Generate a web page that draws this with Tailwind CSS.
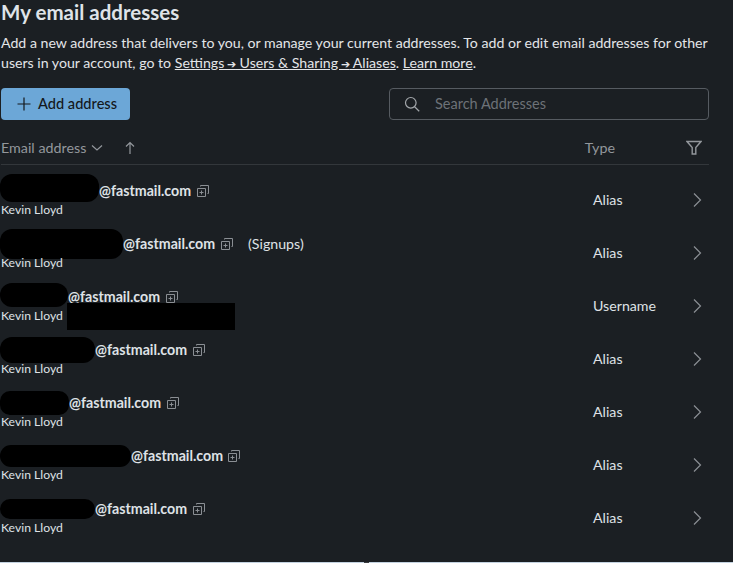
<!DOCTYPE html>
<html lang="en">
<head>
    <meta charset="UTF-8">
    <title>My email addresses</title>
    <script src="https://cdn.jsdelivr.net/npm/@tailwindcss/browser@4"></script>
</head>
<body class="bg-[#1b1f23] font-['Lato',sans-serif] text-[#e3e5e8] h-[563px] overflow-hidden relative">

<div class="w-[708px] ml-[1px]">
    <h1 class="text-[20.5px] leading-[24px] font-bold text-[#dfe3e8]">My email addresses</h1>
    <p class="mt-[9px] text-[14.15px] leading-[20px] text-[#e3e5e8]">
        Add a new address that delivers to you, or manage your current addresses. To add or edit email addresses for other users in your account, go to <a class="underline">Settings <span class="text-[11px] -ml-[1px]">➔</span> Users &amp; Sharing <span class="text-[11px] -ml-[1px]">➔</span> Aliases</a>. <a class="underline">Learn more</a>.
    </p>

    <div class="mt-[14px] flex justify-between items-center">
        <button class="w-[129px] h-[32px] rounded-[4px] bg-[#6ca7d7] text-[#14181c] text-[14.6px] font-medium flex items-center pl-[15px] gap-[6px]">
            <svg width="16" height="16" viewBox="0 0 16 16" fill="none" stroke="currentColor" stroke-width="1.2"><path d="M8 1.5v13M1.5 8h13"/></svg>
            Add address
        </button>
        <div class="w-[320px] h-[32px] rounded-[4px] border border-[#565b61] flex items-center pl-[14px] gap-[15px] text-[14.5px] text-[#6d7278]">
            <svg class="text-[#a3a7ab]" width="16" height="16" viewBox="0 0 16 16" fill="none" stroke="currentColor" stroke-width="1.2"><circle cx="6.8" cy="6.8" r="5.3"/><path d="M10.6 10.8l4.6 4.4"/></svg>
            Search Addresses
        </div>
    </div>

    <div class="mt-[12px] h-[33px] border-b border-[#33373b] flex items-center text-[14.3px] text-[#93979c]">
        <span>Email address</span>
        <svg class="ml-[5px]" width="12" height="12" viewBox="0 0 12 12" fill="none" stroke="currentColor" stroke-width="1.2"><path d="M1 3.5l5 4.5 5-4.5"/></svg>
        <svg class="ml-[21px]" width="12" height="14" viewBox="0 0 12 14" fill="none" stroke="currentColor" stroke-width="1.2"><path d="M6 13V1.5M2 5.5l4-4 4 4"/></svg>
        <span class="ml-auto mr-[71px]">Type</span>
        <svg class="mr-[7px]" width="16" height="16" viewBox="0 0 16 16" fill="none" stroke="currentColor" stroke-width="1.4"><path d="M1 1.5h14L9.8 7.5v6.5H6.2V7.5z"/></svg>
    </div>

    <div class="mt-[8px] -ml-[1px]">
        <!-- row 1 -->
        <div class="h-[53px] flex items-center">
            <div class="flex-1">
                <div class="h-[19px] pt-[3px] flex items-center text-[14.2px] font-bold text-[#dfe2e6]">
                    <span class="block w-[99px] h-[28px] -mt-[8px] -mb-[2px] bg-black rounded-[12px] shrink-0"></span>
                    <span>@fastmail.com</span>
                    <svg class="ml-[6px] text-[#8b8f94]" width="12" height="12" viewBox="0 0 12 12" fill="none" stroke="currentColor"><path d="M3.5 1.5V.5h8v8h-1M.5 3.5h8v8h-8zM4.5 5.5v4M2.5 7.5h4"/></svg>
                </div>
                <div class="h-[20px] pt-[1px] text-[12.2px] leading-[19px] text-[#dfe2e6] ml-[1px]">Kevin Lloyd</div>
            </div>
            <span class="w-[98px] text-[14.2px] text-[#dfe2e6]">Alias</span>
            <svg class="mr-[6px] text-[#8b8f94]" width="12" height="16" viewBox="0 0 12 16" fill="none" stroke="currentColor" stroke-width="1.2"><path d="M3 1.5l6.5 6.5L3 14.5"/></svg>
        </div>
        <!-- row 2 -->
        <div class="h-[53px] flex items-center">
            <div class="flex-1">
                <div class="h-[19px] pt-[3px] flex items-center text-[14.2px] font-bold text-[#dfe2e6]">
                    <span class="block w-[123px] h-[30px] -my-[6px] bg-black rounded-[12px] shrink-0"></span>
                    <span>@fastmail.com</span>
                    <svg class="ml-[6px] text-[#8b8f94]" width="12" height="12" viewBox="0 0 12 12" fill="none" stroke="currentColor"><path d="M3.5 1.5V.5h8v8h-1M.5 3.5h8v8h-8zM4.5 5.5v4M2.5 7.5h4"/></svg>
                    <span class="ml-[15px] font-normal">(Signups)</span>
                </div>
                <div class="h-[20px] pt-[1px] text-[12.2px] leading-[19px] text-[#dfe2e6] ml-[1px]">Kevin Lloyd</div>
            </div>
            <span class="w-[98px] text-[14.2px] text-[#dfe2e6]">Alias</span>
            <svg class="mr-[6px] text-[#8b8f94]" width="12" height="16" viewBox="0 0 12 16" fill="none" stroke="currentColor" stroke-width="1.2"><path d="M3 1.5l6.5 6.5L3 14.5"/></svg>
        </div>
        <!-- row 3 -->
        <div class="h-[53px] flex items-center relative">
            <div class="flex-1">
                <div class="h-[19px] pt-[3px] flex items-center text-[14.2px] font-bold text-[#dfe2e6]">
                    <span class="block w-[68px] h-[24px] -mt-[5px] -mb-[1px] bg-black rounded-[12px] shrink-0"></span>
                    <span>@fastmail.com</span>
                    <svg class="ml-[6px] text-[#8b8f94]" width="12" height="12" viewBox="0 0 12 12" fill="none" stroke="currentColor"><path d="M3.5 1.5V.5h8v8h-1M.5 3.5h8v8h-8zM4.5 5.5v4M2.5 7.5h4"/></svg>
                </div>
                <div class="h-[20px] pt-[1px] text-[12.2px] leading-[19px] text-[#dfe2e6] ml-[1px]">Kevin Lloyd</div>
            </div>
            <span class="w-[98px] text-[14.2px] text-[#dfe2e6]">Username</span>
            <svg class="mr-[6px] text-[#8b8f94]" width="12" height="16" viewBox="0 0 12 16" fill="none" stroke="currentColor" stroke-width="1.2"><path d="M3 1.5l6.5 6.5L3 14.5"/></svg>
            <div class="absolute left-[67px] top-[24px] w-[168px] h-[27px] bg-black"></div>
        </div>
        <!-- row 4 -->
        <div class="h-[53px] flex items-center">
            <div class="flex-1">
                <div class="h-[19px] pt-[3px] flex items-center text-[14.2px] font-bold text-[#dfe2e6]">
                    <span class="block w-[95px] h-[26px] -my-[4px] bg-black rounded-[12px] shrink-0"></span>
                    <span>@fastmail.com</span>
                    <svg class="ml-[6px] text-[#8b8f94]" width="12" height="12" viewBox="0 0 12 12" fill="none" stroke="currentColor"><path d="M3.5 1.5V.5h8v8h-1M.5 3.5h8v8h-8zM4.5 5.5v4M2.5 7.5h4"/></svg>
                </div>
                <div class="h-[20px] pt-[1px] text-[12.2px] leading-[19px] text-[#dfe2e6] ml-[1px]">Kevin Lloyd</div>
            </div>
            <span class="w-[98px] text-[14.2px] text-[#dfe2e6]">Alias</span>
            <svg class="mr-[6px] text-[#8b8f94]" width="12" height="16" viewBox="0 0 12 16" fill="none" stroke="currentColor" stroke-width="1.2"><path d="M3 1.5l6.5 6.5L3 14.5"/></svg>
        </div>
        <!-- row 5 -->
        <div class="h-[53px] flex items-center">
            <div class="flex-1">
                <div class="h-[19px] pt-[3px] flex items-center text-[14.2px] font-bold text-[#dfe2e6]">
                    <span class="block w-[69px] h-[24px] -my-[3px] bg-black rounded-[10px] shrink-0"></span>
                    <span>@fastmail.com</span>
                    <svg class="ml-[6px] text-[#8b8f94]" width="12" height="12" viewBox="0 0 12 12" fill="none" stroke="currentColor"><path d="M3.5 1.5V.5h8v8h-1M.5 3.5h8v8h-8zM4.5 5.5v4M2.5 7.5h4"/></svg>
                </div>
                <div class="h-[20px] pt-[1px] text-[12.2px] leading-[19px] text-[#dfe2e6] ml-[1px]">Kevin Lloyd</div>
            </div>
            <span class="w-[98px] text-[14.2px] text-[#dfe2e6]">Alias</span>
            <svg class="mr-[6px] text-[#8b8f94]" width="12" height="16" viewBox="0 0 12 16" fill="none" stroke="currentColor" stroke-width="1.2"><path d="M3 1.5l6.5 6.5L3 14.5"/></svg>
        </div>
        <!-- row 6 -->
        <div class="h-[53px] flex items-center">
            <div class="flex-1">
                <div class="h-[19px] pt-[3px] flex items-center text-[14.2px] font-bold text-[#dfe2e6]">
                    <span class="block w-[131px] h-[22px] -my-[2px] bg-black rounded-[11px] shrink-0"></span>
                    <span>@fastmail.com</span>
                    <svg class="ml-[5px] text-[#8b8f94]" width="12" height="12" viewBox="0 0 12 12" fill="none" stroke="currentColor"><path d="M3.5 1.5V.5h8v8h-1M.5 3.5h8v8h-8zM4.5 5.5v4M2.5 7.5h4"/></svg>
                </div>
                <div class="h-[20px] pt-[1px] text-[12.2px] leading-[19px] text-[#dfe2e6] ml-[1px]">Kevin Lloyd</div>
            </div>
            <span class="w-[98px] text-[14.2px] text-[#dfe2e6]">Alias</span>
            <svg class="mr-[6px] text-[#8b8f94]" width="12" height="16" viewBox="0 0 12 16" fill="none" stroke="currentColor" stroke-width="1.2"><path d="M3 1.5l6.5 6.5L3 14.5"/></svg>
        </div>
        <!-- row 7 -->
        <div class="h-[53px] flex items-center">
            <div class="flex-1">
                <div class="h-[19px] pt-[3px] flex items-center text-[14.2px] font-bold text-[#dfe2e6]">
                    <span class="block w-[95px] h-[20px] -my-[1px] bg-black rounded-[10px] shrink-0"></span>
                    <span>@fastmail.com</span>
                    <svg class="ml-[6px] text-[#8b8f94]" width="12" height="12" viewBox="0 0 12 12" fill="none" stroke="currentColor"><path d="M3.5 1.5V.5h8v8h-1M.5 3.5h8v8h-8zM4.5 5.5v4M2.5 7.5h4"/></svg>
                </div>
                <div class="h-[20px] pt-[1px] text-[12.2px] leading-[19px] text-[#dfe2e6] ml-[1px]">Kevin Lloyd</div>
            </div>
            <span class="w-[98px] text-[14.2px] text-[#dfe2e6]">Alias</span>
            <svg class="mr-[6px] text-[#8b8f94]" width="12" height="16" viewBox="0 0 12 16" fill="none" stroke="currentColor" stroke-width="1.2"><path d="M3 1.5l6.5 6.5L3 14.5"/></svg>
        </div>
    </div>
</div>

<!-- edge of the next window along the bottom -->
<div class="absolute left-0 right-0 bottom-0 h-[1px] bg-[#c3d2e0]">
    <div class="absolute left-[364px] w-[5px] h-[1px] bg-[#3a3c3f]"></div>
</div>
</body>
</html>
